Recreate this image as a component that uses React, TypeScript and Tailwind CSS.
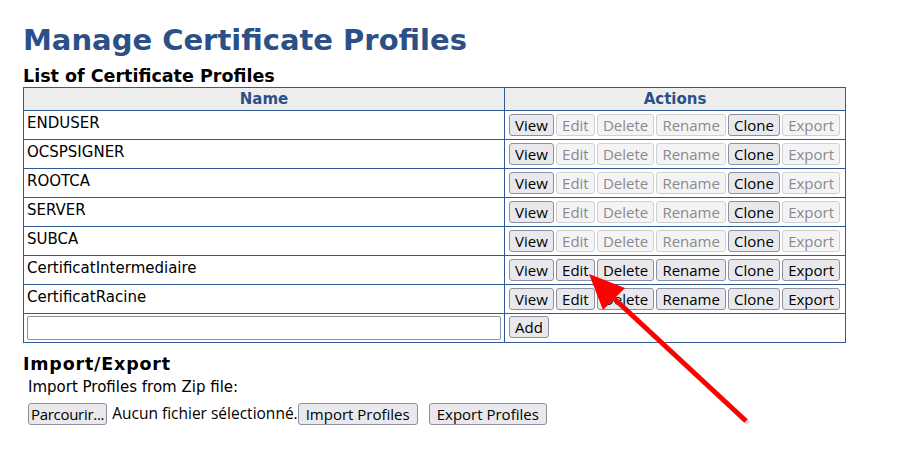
const profiles = [
  { name: "ENDUSER", fixed: true },
  { name: "OCSPSIGNER", fixed: true },
  { name: "ROOTCA", fixed: true },
  { name: "SERVER", fixed: true },
  { name: "SUBCA", fixed: true },
  { name: "CertificatIntermediaire", fixed: false },
  { name: "CertificatRacine", fixed: false },
];

function Btn({ label, disabled = false, tight = false, wide = false }: { label: string; disabled?: boolean; tight?: boolean; wide?: boolean }) {
  return (
    <button
      disabled={disabled}
      className={
        "h-[22px] rounded-[3px] border text-[15px] leading-[18px] font-['Open_Sans',sans-serif] " +
        (tight ? "px-[2px] tracking-[-0.3px] " : wide ? "px-[7px] " : "px-[5.1px] ") +
        (disabled
          ? "border-[#d0d0d0] bg-[#f4f4f6] text-[#8a8a8a]"
          : "border-[#8f8f9d] bg-[#e9e9ed] text-black")
      }
    >
      {label}
    </button>
  );
}

export default function App() {
  return (
    <div className="relative w-[902px] h-[476px] bg-white font-['DejaVu_Sans',Verdana,sans-serif] text-black px-[23px] pt-[22px]">
      <h1 className="text-[29px] leading-[36px] font-bold text-[#2b5087]">Manage Certificate Profiles</h1>
      <h2 className="text-[17.5px] leading-[21px] font-bold mt-[8px]">List of Certificate Profiles</h2>

      <table className="w-[823px] table-fixed border-collapse border border-[#2f5b94] text-[15px]">
        <thead>
          <tr className="bg-[#eeeeee]">
            <th className="h-[23px] w-[481px] border border-[#2f5b94] text-[#2b5087] font-bold text-[15px] leading-[20px] p-0">Name</th>
            <th className="h-[23px] border border-[#2f5b94] text-[#2b5087] font-bold text-[15px] leading-[20px] p-0">Actions</th>
          </tr>
        </thead>
        <tbody>
          {profiles.map((p) => (
            <tr key={p.name} className="h-[29px]">
              <td className="border border-[#2f5b94] align-top px-[3px] pt-[3px] leading-[18px]">{p.name}</td>
              <td className="border border-[#2f5b94] px-[4px] py-[3px]">
                <div className="flex gap-[2px]">
                  <Btn label="View" />
                  <Btn label="Edit" disabled={p.fixed} />
                  <Btn label="Delete" disabled={p.fixed} />
                  <Btn label="Rename" disabled={p.fixed} />
                  <Btn label="Clone" />
                  <Btn label="Export" disabled={p.fixed} />
                </div>
              </td>
            </tr>
          ))}
          <tr className="h-[29px]">
            <td className="border border-[#2f5b94] px-[3px]">
              <input type="text" className="w-[474px] h-[24px] border border-[#8f8f9d] rounded-[2px] bg-white" />
            </td>
            <td className="border border-[#2f5b94] px-[4px]">
              <Btn label="Add" />
            </td>
          </tr>
        </tbody>
      </table>

      <h2 className="text-[17.5px] leading-[21px] font-bold mt-[11px] tracking-[0.8px]">Import/Export</h2>
      <div className="pl-[5px] text-[15px]">
        <div className="mt-[3px] leading-[18px]">Import Profiles from Zip file:</div>
        <div className="mt-[6px] flex items-center">
          <Btn label="Parcourir..." tight />
          <span className="ml-[5px] text-[15.5px] font-['Open_Sans',sans-serif]">Aucun fichier sélectionné.</span>
          <Btn label="Import Profiles" wide />
          <span className="w-[11px]" />
          <Btn label="Export Profiles" wide />
        </div>
      </div>

      <svg className="absolute left-0 top-0 pointer-events-none" width="902" height="476">
        <line x1="746" y1="421" x2="606" y2="291" stroke="#bbbbbb" strokeWidth="5" opacity="0.5" transform="translate(2,2)" />
        <line x1="746" y1="421" x2="606" y2="291" stroke="#ff0000" strokeWidth="5" />
        <polygon points="589,274 625,288 603,310" fill="#ff0000" />
      </svg>
    </div>
  );
}
